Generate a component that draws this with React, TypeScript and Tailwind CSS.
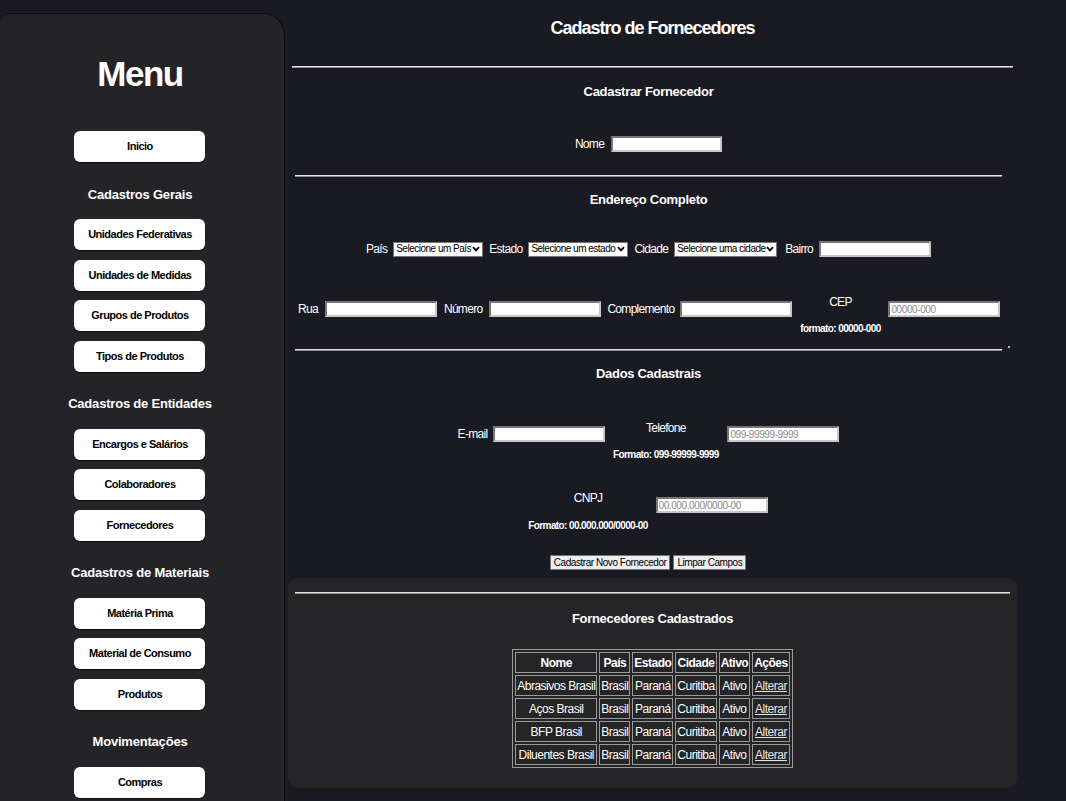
import React from "react";

const font = {
  fontFamily: '"Liberation Sans Narrow", "Arial Narrow", "Liberation Sans", Arial, sans-serif',
};

const grupos: { titulo?: string; itens: string[] }[] = [
  { itens: ["Inicio"] },
  {
    titulo: "Cadastros Gerais",
    itens: ["Unidades Federativas", "Unidades de Medidas", "Grupos de Produtos", "Tipos de Produtos"],
  },
  { titulo: "Cadastros de Entidades", itens: ["Encargos e Salários", "Colaboradores", "Fornecedores"] },
  { titulo: "Cadastros de Materiais", itens: ["Matéria Prima", "Material de Consumo", "Produtos"] },
  { titulo: "Movimentações", itens: ["Compras"] },
];

const fornecedores = ["Abrasivos Brasil", "Aços Brasil", "BFP Brasil", "Diluentes Brasil"];

// texto do formulário (fonte estreita na referência, então aperta o espaçamento)
const rotulo = "text-[12px] leading-[16px] tracking-[-0.7px]";
const dica = "whitespace-nowrap text-[10px] font-bold leading-[14px] tracking-[-0.6px]";
const subtitulo = "text-center text-[13px] font-bold leading-[18px] tracking-[-0.3px]";

function Campo({ w = "w-[112px]", placeholder }: { w?: string; placeholder?: string }) {
  return (
    <input
      type="text"
      placeholder={placeholder}
      className={`${w} block h-[16px] border-2 border-t-[#767676] border-l-[#767676] border-b-[#c8c8c8] border-r-[#c8c8c8] bg-white px-[1px] text-[10px] tracking-[-0.4px] text-black outline-none placeholder:text-[#8a8a8a]`}
    />
  );
}

function Selecao({ texto, w }: { texto: string; w: string }) {
  return (
    <div
      className={`${w} flex h-[15px] items-center justify-between border border-[#767676] bg-white px-[2px] text-[10px] leading-none tracking-[-0.5px] text-black`}
    >
      <span className="whitespace-nowrap">{texto}</span>
      <svg width="8" height="6" viewBox="0 0 8 6" className="shrink-0">
        <path d="M1 1.2 L4 4.4 L7 1.2" fill="none" stroke="#000" strokeWidth="1.8" />
      </svg>
    </div>
  );
}

function Linha({ className = "" }: { className?: string }) {
  return <div className={`h-[2px] border-t border-t-[#e4e4e4] border-b border-b-[#8d8d8d] ${className}`} />;
}

function Sidebar() {
  return (
    <aside className="mt-[13px] flex w-[285px] shrink-0 flex-col items-center rounded-tr-[22px] rounded-tl-[10px] border border-l-0 border-[#0d0d10] bg-[#242428] pb-10 pr-[4px]">
      <h1 className="mt-[39px] text-[35px] font-bold leading-[42px] tracking-[-1.5px] text-white">Menu</h1>
      <div className="mt-[36px] flex flex-col items-center">
        {grupos.map((g, i) => (
          <div key={i} className="flex flex-col items-center">
            {g.titulo && (
              <div
                className={`${i === 1 ? "mt-[24px] mb-[15px]" : "mt-[23px] mb-[16px]"} text-[13px] font-bold leading-[18px] tracking-[-0.2px] text-white`}
              >
                {g.titulo}
              </div>
            )}
            <div className="flex flex-col gap-[9.5px]">
              {g.itens.map((it) => (
                <button
                  key={it}
                  type="button"
                  className="h-[31px] w-[131px] rounded-[6px] bg-white text-[11px] font-bold tracking-[-0.5px] text-black shadow-[0_1px_1px_rgba(0,0,0,0.6)]"
                >
                  {it}
                </button>
              ))}
            </div>
          </div>
        ))}
      </div>
    </aside>
  );
}

export default function App() {
  return (
    <div className="flex min-h-[801px] bg-[#1a1a22] text-white" style={font}>
      <Sidebar />
      <main className="ml-[3px] flex w-[729px] flex-col">
        <h2 className="mt-[16px] text-center text-[18px] font-bold leading-[24px] tracking-[-1px]">
          Cadastro de Fornecedores
        </h2>
        <Linha className="mx-[4px] mt-[26px]" />

        <section className="ml-[7px] mr-[15px] flex flex-col">
          <h3 className={`mt-[15px] ${subtitulo}`}>Cadastrar Fornecedor</h3>
          <div className="mt-[35px] flex items-center justify-center gap-[7px]">
            <span className={rotulo}>Nome</span>
            <Campo w="w-[111px]" />
          </div>
          <Linha className="mt-[23px]" />

          <h3 className={`mt-[14px] ${subtitulo}`}>Endereço Completo</h3>
          <div className="mt-[32px] flex items-center justify-center gap-[6px]">
            <span className={rotulo}>País</span>
            <Selecao texto="Selecione um País" w="w-[90px]" />
            <span className={rotulo}>Estado</span>
            <Selecao texto="Selecione um estado" w="w-[100px]" />
            <span className={rotulo}>Cidade</span>
            <Selecao texto="Selecione uma cidade" w="w-[103px]" />
            <span className={`ml-[2px] ${rotulo}`}>Bairro</span>
            <Campo />
          </div>

          <div className="mt-[37px] flex items-start pl-[3px]">
            <span className={`mt-[7px] ${rotulo}`}>Rua</span>
            <div className="ml-[7px] mt-[7px]">
              <Campo />
            </div>
            <span className={`ml-[7px] mt-[7px] ${rotulo}`}>Número</span>
            <div className="ml-[7px] mt-[7px]">
              <Campo />
            </div>
            <span className={`ml-[6px] mt-[7px] ${rotulo}`}>Complemento</span>
            <div className="ml-[6px] mt-[7px]">
              <Campo />
            </div>
            <div className="ml-[9px] flex w-[78px] flex-col items-center">
              <span className={rotulo}>CEP</span>
              <span className={`mt-[12px] ${dica}`}>formato: 00000-000</span>
            </div>
            <div className="ml-[9px] mt-[7px]">
              <Campo placeholder="00000-000" />
            </div>
          </div>

          <div className="mt-[10px] flex items-end">
            <Linha className="flex-1" />
            <span className="mb-[3px] ml-[6px] mr-[-8px] h-[2px] w-[2px] bg-[#bbbbbb]" />
          </div>

          <h3 className={`mt-[14px] ${subtitulo}`}>Dados Cadastrais</h3>
          <div className="mt-[37px] flex items-start justify-center">
            <span className={`mt-[6px] ${rotulo}`}>E-mail</span>
            <div className="ml-[6px] mt-[6px]">
              <Campo />
            </div>
            <div className="ml-[9px] flex w-[103px] flex-col items-center">
              <span className={rotulo}>Telefone</span>
              <span className={`mt-[12px] ${dica}`}>Formato: 099-99999-9999</span>
            </div>
            <div className="ml-[10px] mt-[6px]">
              <Campo placeholder="099-99999-9999" />
            </div>
          </div>

          <div className="mt-[28px] flex items-start justify-center">
            <div className="flex w-[117px] flex-col items-center">
              <span className={rotulo}>CNPJ</span>
              <span className={`mt-[13px] ${dica}`}>Formato: 00.000.000/0000-00</span>
            </div>
            <div className="ml-[9px] mt-[7px]">
              <Campo placeholder="00.000.000/0000-00" />
            </div>
          </div>

          <div className="mt-[22px] flex justify-center gap-[3px] pr-[1px]">
            <button
              type="button"
              className="h-[15px] border border-[#767676] bg-[#efefef] px-[3px] text-[10px] leading-none tracking-[-0.45px] text-black"
            >
              Cadastrar Novo Fornecedor
            </button>
            <button
              type="button"
              className="h-[15px] border border-[#767676] bg-[#efefef] px-[3px] text-[10px] leading-none tracking-[-0.45px] text-black"
            >
              Limpar Campos
            </button>
          </div>
        </section>

        <section className="mt-[8px] flex flex-col items-center rounded-[10px] bg-[#252528] px-[7px] pb-[20px] pt-[14px]">
          <Linha className="w-full" />
          <h3 className={`mt-[16px] ${subtitulo}`}>Fornecedores Cadastrados</h3>
          <table className="mt-[21px] border-separate border-spacing-[2px] border border-[#9a9a9a] text-[12px] tracking-[-0.5px]">
            <thead>
              <tr>
                {["Nome", "País", "Estado", "Cidade", "Ativo", "Ações"].map((h) => (
                  <th key={h} className="h-[21px] border border-[#9a9a9a] px-[1px] font-bold leading-none">
                    {h}
                  </th>
                ))}
              </tr>
            </thead>
            <tbody>
              {fornecedores.map((n) => (
                <tr key={n}>
                  <td className="h-[21px] border border-[#9a9a9a] px-[1px] text-center leading-none">{n}</td>
                  <td className="border border-[#9a9a9a] px-[1px] text-center leading-none">Brasil</td>
                  <td className="border border-[#9a9a9a] px-[1px] text-center leading-none">Paraná</td>
                  <td className="border border-[#9a9a9a] px-[1px] text-center leading-none">Curitiba</td>
                  <td className="border border-[#9a9a9a] px-[1px] text-center leading-none">Ativo</td>
                  <td className="border border-[#9a9a9a] px-[1px] text-center leading-none">
                    <a href="#" className="text-[#e4e4e4] underline">
                      Alterar
                    </a>
                  </td>
                </tr>
              ))}
            </tbody>
          </table>
        </section>
      </main>
    </div>
  );
}
